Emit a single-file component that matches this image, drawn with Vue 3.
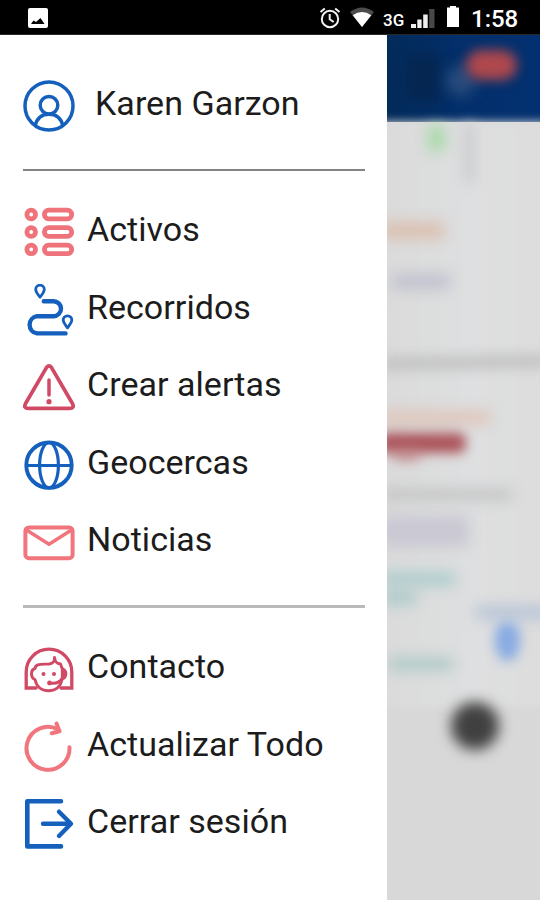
<script setup>
const primary = [
  { label: 'Activos', icon: 'list' },
  { label: 'Recorridos', icon: 'route' },
  { label: 'Crear alertas', icon: 'alert' },
  { label: 'Geocercas', icon: 'globe' },
  { label: 'Noticias', icon: 'mail' },
]
const secondary = [
  { label: 'Contacto', icon: 'agent' },
  { label: 'Actualizar Todo', icon: 'refresh' },
  { label: 'Cerrar sesión', icon: 'logout' },
]
const groups = [primary, secondary]
</script>

<template>
  <div class="screen">
    <header class="status">
      <svg class="picture" viewBox="0 0 20 20"><rect width="20" height="20" rx="2" fill="#fff" /><path d="M3 16 5.500 12.500l2.500 1.500L12.500 10 16.500 16z" fill="#000" /></svg>
      <div class="indicators">
        <svg class="alarm" viewBox="0 0 22 22" fill="none" stroke="#f2f2f2" stroke-width="2"><circle cx="11" cy="12" r="8.2" /><path d="M10.7 7v5.2l4 2.8M1.5 5 5.8 1.5M20.5 5l-4.3-3.5" /></svg>
        <svg class="wifi" viewBox="0 0 24 20"><path d="M12 20 0 5Q12-4 24 5z" fill="#4c4c4c" /><path d="M12 20 2.7 8.3Q12 1.5 21.3 8.3z" fill="#fff" /></svg>
        <span class="network">3G</span>
        <svg class="signal" viewBox="0 0 24 19"><g fill="#eee"><rect y="15" width="5" height="4" /><rect x="6.3" y="10.5" width="4.3" height="8.5" /><rect x="12.2" y="5.5" width="4.5" height="13.5" /></g><rect x="18.2" y="0" width="5.3" height="19" fill="#484848" /></svg>
        <svg class="battery" viewBox="0 0 12 21"><path d="M0 1.500h3V0h6v1.500h3v19.500H0z" fill="#fff" /></svg>
        <span class="clock">1:58</span>
      </div>
    </header>

    <div class="body">
      <nav class="drawer">
        <div class="profile">
          <svg class="icon" viewBox="0 0 52 52" fill="none" stroke="#1560bd" stroke-width="3.5"><circle cx="26" cy="26" r="24" /><circle cx="26" cy="25.3" r="8.8" /><path d="M12.2 45.5C14 38 19 34.2 26 34.2S38 38 39.8 45.5" /></svg>
          <span>Karen Garzon</span>
        </div>

        <ul v-for="(items, index) in groups" :key="index" class="menu">
          <li v-for="item in items" :key="item.label" class="row">
            <svg class="icon" viewBox="0 0 52 52" fill="none" stroke-linecap="round" stroke-linejoin="round">
              <g v-if="item.icon === 'list'" stroke="#ee737b" stroke-width="4.8">
                <template v-for="y in [8.5, 26, 43.4]" :key="y">
                  <circle cx="8.2" :cy="y" r="4.3" />
                  <rect x="21.4" :y="y - 4.3" width="27.3" height="8.6" rx="4.3" />
                </template>
              </g>
              <g v-else-if="item.icon === 'route'" stroke="#1560bd">
                <path d="M20.8 17.2H30.5a7.5 7.5 0 0 1 0 15H14a8.7 8.7 0 0 0 0 17.2H42.5" stroke-width="4.4" />
                <path d="M17 13.2C14.5 9.8 12.7 8 12.7 5.5a4.3 4.3 0 0 1 8.6 0C21.3 8 19.5 9.8 17 13.2zM44.5 43.8C42 40.4 40.2 38.6 40.2 36.1a4.3 4.3 0 0 1 8.6 0C48.8 38.6 47 40.4 44.5 43.8z" stroke-width="2.8" />
              </g>
              <g v-else-if="item.icon === 'alert'" stroke="#d04965">
                <path d="M23.6 6.4 2.7 42.3Q0 47.4 5.5 47.4H46.5Q52 47.4 49.3 42.3L28.4 6.4Q26 3.2 23.6 6.4z" stroke-width="3.7" />
                <path d="M26 19v15" stroke-width="3.5" />
                <circle cx="26" cy="40.7" r="2.6" fill="#d04965" stroke="none" />
              </g>
              <g v-else-if="item.icon === 'globe'" stroke="#1560bd" stroke-width="3.9">
                <circle cx="26" cy="26.2" r="22.7" /><ellipse cx="26" cy="26.2" rx="9.4" ry="22.7" stroke-width="3.2" /><path d="M3.5 26.5h45" stroke-width="3.2" stroke-linecap="butt" />
              </g>
              <g v-else-if="item.icon === 'mail'" stroke="#f0757c" stroke-width="4">
                <rect x="2.4" y="11.5" width="47.2" height="30.7" rx="3.5" /><path d="M3.5 14 26 28.2 48.5 14" stroke-width="3.4" />
              </g>
              <g v-else-if="item.icon === 'agent'" stroke="#d04965" stroke-width="3.3" stroke-linejoin="miter">
                <path d="M13 45H3.2V29a22.800 22.800 0 0 1 45.600 0v16H38" />
                <path d="M12 25.500Q8.500 26.500 8.500 31 8.500 35 12 36.500C13.500 43.500 18 47.700 25.500 47.700S37.500 43.500 39 36.500M12 25.500C12.500 20.500 18 21.500 26 21 31 20.500 31.500 18 31.500 14.500 32 19 33.500 20.500 37.500 21L39.300 26V35Q36 41.500 27 40" stroke-width="2.900" stroke-linejoin="round" />
                <path d="M38.500 24Q44.300 25.500 44.300 31T38.500 37.500z" fill="#d04965" stroke="none" />
                <g fill="#d04965" stroke="none"><circle cx="20.500" cy="31" r="2" /><circle cx="31" cy="31" r="2" /><circle cx="26.500" cy="40" r="2.400" /></g>
              </g>
              <g v-else-if="item.icon === 'refresh'" stroke="#f0757c" stroke-width="4">
                <path d="M46.5 26.2A21.5 21.5 0 1 1 34.5 8" />
                <path d="M33.5 2.500 36.500 10.200 28.800 12.300" />
              </g>
              <g v-else stroke="#1560bd" stroke-width="4.6">
                <path d="M38 3.200H4.300V48.400H38" /><path d="M20 25.800H47M36 13.700 48 25.800 36 38" stroke-width="4.400" />
              </g>
            </svg>
            <span>{{ item.label }}</span>
          </li>
        </ul>
      </nav>

      <main class="backdrop">
        <div class="appbar"></div>
        <div class="sheet"></div>
        <i class="smear shade"></i><i class="smear bell"></i><i class="smear badge"></i>
        <i class="smear green"></i><i class="smear pole"></i>
        <i class="smear peach-a"></i><i class="smear lilac-a"></i><i class="smear road-a"></i>
        <i class="smear peach-b"></i><i class="smear brand"></i><i class="smear brand-tail"></i><i class="smear road-b"></i>
        <i class="smear lilac-b"></i><i class="smear teal-a"></i><i class="smear teal-b"></i><i class="smear teal-c"></i>
        <i class="smear caption"></i><i class="smear marker"></i><i class="smear fab"></i>
      </main>
    </div>
  </div>
</template>

<style>
body { margin: 0; }
</style>

<style scoped>
.screen { width: 540px; height: 900px; display: flex; flex-direction: column; overflow: hidden; background: #fff; font-family: Roboto, sans-serif; }
.status { height: 35px; flex: none; box-sizing: border-box; background: #000; border-bottom: 1px solid #292929; display: flex; align-items: center; justify-content: space-between; padding: 0 22px 0 28px; color: #fff; }
.picture { width: 20px; height: 20px; margin-top: 2px; }
.indicators { display: flex; align-items: center; height: 35px; }
.alarm { width: 22px; height: 22px; margin-right: 9px; margin-top: 2px; }
.wifi { width: 24px; height: 20px; margin-right: 9px; }
.network { width: 28px; font-size: 17px; font-weight: 500; line-height: 20px; margin-top: 6px; }
.signal { width: 24px; height: 19px; margin-right: 12px; margin-top: 3px; }
.battery { width: 12px; height: 21px; margin-right: 12px; margin-top: -1px; }
.clock { width: 47px; font-size: 24px; font-weight: 500; line-height: 28px; margin-top: 4px; white-space: nowrap; }
.body { flex: 1; display: flex; min-height: 0; }
.drawer { width: 387px; flex: none; box-sizing: border-box; padding: 0 22.5px 0 23px; background: #fff; color: #1c1c1c; font-size: 34px; line-height: 40px; letter-spacing: .03px; }
.profile { height: 134px; display: flex; box-sizing: border-box; padding-top: 44.5px; gap: 20px; white-space: nowrap; }
.profile span { margin-top: 3px; }
.icon { width: 52px; height: 52px; flex: none; display: block; }
.menu { list-style: none; margin: 0; padding: 22.2px 0 24px; border-top: 2px solid #838383; }
.menu + .menu { border-top: 3px solid #b9b9b9; padding-top: 22px; }
.row { height: 77.6px; display: flex; align-items: center; gap: 12px; white-space: nowrap; }
.row span { margin-top: -6px; }
.backdrop { position: relative; flex: 1; overflow: hidden; background: #d8d8d8; }
.appbar { height: 87px; background: linear-gradient(90deg, #032b5a, #032f6b 50%, #033070); }
.sheet { height: 585px; margin: 0 -20px; background: linear-gradient(90deg, #dadada, #dedfe0 55%, #dcdcdc); filter: blur(5px); }
.smear { position: absolute; display: block; filter: blur(7px); }
.shade { left: 20px; top: 20px; width: 32px; height: 46px; background: #052650; }
.bell { left: 59px; top: 30px; width: 30px; height: 31px; border-radius: 50%; background: #294c7d; }
.badge { left: 79px; top: 15px; width: 51px; height: 30px; border-radius: 15px; background: #ae484d; filter: blur(6px); }
.green { left: 41px; top: 91px; width: 17px; height: 25px; background: #a8d9a8; }
.pole { left: 78px; top: 89px; width: 9px; height: 58px; background: #c6c7ca; }
.peach-a { left: -5px; top: 187px; width: 62px; height: 17px; background: #dbc0b1; }
.lilac-a { left: 5px; top: 239px; width: 58px; height: 15px; background: #c0c1ce; }
.road-a { left: -5px; top: 322px; width: 166px; height: 11px; background: #bbbcbc; transform: rotate(-1deg); }
.peach-b { left: -5px; top: 376px; width: 108px; height: 13px; background: #dfc4b8; }
.brand { left: -8px; top: 398px; width: 87px; height: 20px; border-radius: 8px; background: #ab5359; filter: blur(6px); }
.brand-tail { left: 7px; top: 415px; width: 25px; height: 9px; background: #bd7b7e; }
.road-b { left: -5px; top: 454px; width: 130px; height: 11px; background: #c2c3c3; }
.lilac-b { left: -5px; top: 481px; width: 87px; height: 31px; background: #c9c8d3; }
.teal-a { left: -5px; top: 537px; width: 73px; height: 14px; background: #aecdcd; filter: blur(7px); }
.teal-b { left: -5px; top: 554px; width: 34px; height: 16px; background: #b0cbcb; }
.teal-c { left: 2px; top: 622px; width: 64px; height: 14px; background: #b2cbc8; filter: blur(7px); }
.caption { left: 89px; top: 571px; width: 80px; height: 13px; background: #b6c4d6; }
.marker { left: 108px; top: 587px; width: 25px; height: 39px; border-radius: 40% 40% 50% 50%; background: #87abe3; filter: blur(6px); }
.fab { left: 64px; top: 667px; width: 48px; height: 48px; border-radius: 50%; background: #404040; }
</style>
